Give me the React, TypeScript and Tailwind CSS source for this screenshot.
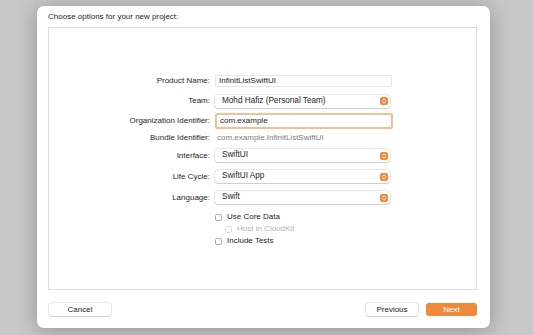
import React from 'react';

const font = { fontFamily: '"Liberation Sans", Arial, sans-serif' };

const Stepper = () => (
    <span className="w-[8px] h-[8px] rounded-[2px] bg-[#ee8a3a] flex items-center justify-center">
        <svg width="8" height="8" viewBox="0 0 8 8" fill="none">
            <path d="M2.6 3.2 L4 1.9 L5.4 3.2" stroke="white" strokeWidth="0.9" strokeLinecap="round" strokeLinejoin="round" />
            <path d="M2.6 4.8 L4 6.1 L5.4 4.8" stroke="white" strokeWidth="0.9" strokeLinecap="round" strokeLinejoin="round" />
        </svg>
    </span>
);

const Row = ({ label, h, children }: { label: string; h: string; children: React.ReactNode }) => (
    <div className={`flex items-center ${h}`}>
        <div className="w-[166px] pr-[5px] text-right text-[8px] text-[#262626]">{label}</div>
        <div className="flex-1 flex items-center">{children}</div>
    </div>
);

const Popup = ({ value }: { value: string }) => (
    <div className="w-[175px] h-[13px] bg-white rounded-[3px] shadow-[0_0_0_0.5px_rgba(0,0,0,0.18),0_1px_1px_rgba(0,0,0,0.12)] flex items-center justify-between pl-[7px] pr-[2px]">
        <span className="text-[8.2px] text-[#1e1e1e]">{value}</span>
        <Stepper />
    </div>
);

const Check = ({ label, disabled, indent }: { label: string; disabled?: boolean; indent?: boolean }) => (
    <div className={`flex items-center h-[12px] ${indent ? 'pl-[10px]' : ''}`}>
        <span className={`w-[7px] h-[7px] rounded-[1.5px] bg-white border ${disabled ? 'border-[#dcdcdc]' : 'border-[#a8a8a8]'}`} />
        <span className={`ml-[5px] text-[8px] ${disabled ? 'text-[#b4b4b4]' : 'text-[#262626]'}`}>{label}</span>
    </div>
);

const App = () => {
    return (
        <div className="w-[533px] h-[335px] bg-[#c8c8c8] pl-[37px] pt-[6px] overflow-hidden" style={font}>
            <div className="w-[453px] h-[322px] bg-white rounded-[7px] shadow-[0_2px_22px_rgba(0,0,0,0.28)] flex flex-col pl-[11px] pr-[13px] pt-[5px]">
                <div className="h-[12px] leading-[12px] text-[8px] text-[#262626]">Choose options for your new project:</div>
                <div className="mt-[4px] h-[263px] border border-[#dedede] bg-white pt-[43px]">
                    <Row label="Product Name:" h="h-[20px]">
                        <div className="w-[177px] h-[12px] border border-[#e8e8e8] flex items-center pl-[3px] text-[8px] text-[#222]">InfinitListSwiftUI</div>
                    </Row>
                    <Row label="Team:" h="h-[20px]">
                        <Popup value="Mohd Hafiz (Personal Team)" />
                    </Row>
                    <Row label="Organization Identifier:" h="h-[20px]">
                        <div className="w-[178px] h-[16px] rounded-[2px] border-2 border-[#f2bf98] bg-white flex items-center pl-[3px] text-[8px] text-[#222]">com.example</div>
                    </Row>
                    <Row label="Bundle Identifier:" h="h-[14px]">
                        <span className="pl-[2px] text-[8px] text-[#7d7d7d]">com.example.InfinitListSwiftUI</span>
                    </Row>
                    <Row label="Interface:" h="h-[21px]">
                        <Popup value="SwiftUI" />
                    </Row>
                    <Row label="Life Cycle:" h="h-[21px]">
                        <Popup value="SwiftUI App" />
                    </Row>
                    <Row label="Language:" h="h-[21px]">
                        <Popup value="Swift" />
                    </Row>
                    <div className="mt-[3px] pl-[166px] flex flex-col">
                        <Check label="Use Core Data" />
                        <Check label="Host in CloudKit" disabled indent />
                        <Check label="Include Tests" />
                    </div>
                </div>
                <div className="mt-[13px] flex items-center justify-between pl-[1px]">
                    <button className="w-[62px] h-[13px] rounded-[3px] bg-white shadow-[0_0_0_0.5px_rgba(0,0,0,0.18),0_1px_1px_rgba(0,0,0,0.12)] text-[8px] text-[#222]">Cancel</button>
                    <div className="flex items-center gap-[8px]">
                        <button className="w-[52px] h-[13px] rounded-[3px] bg-white shadow-[0_0_0_0.5px_rgba(0,0,0,0.18),0_1px_1px_rgba(0,0,0,0.12)] text-[8px] text-[#222]">Previous</button>
                        <button className="w-[51px] h-[13px] rounded-[3px] bg-[#ef8a3a] text-[8px] text-white">Next</button>
                    </div>
                </div>
            </div>
        </div>
    );
};

export default App;
